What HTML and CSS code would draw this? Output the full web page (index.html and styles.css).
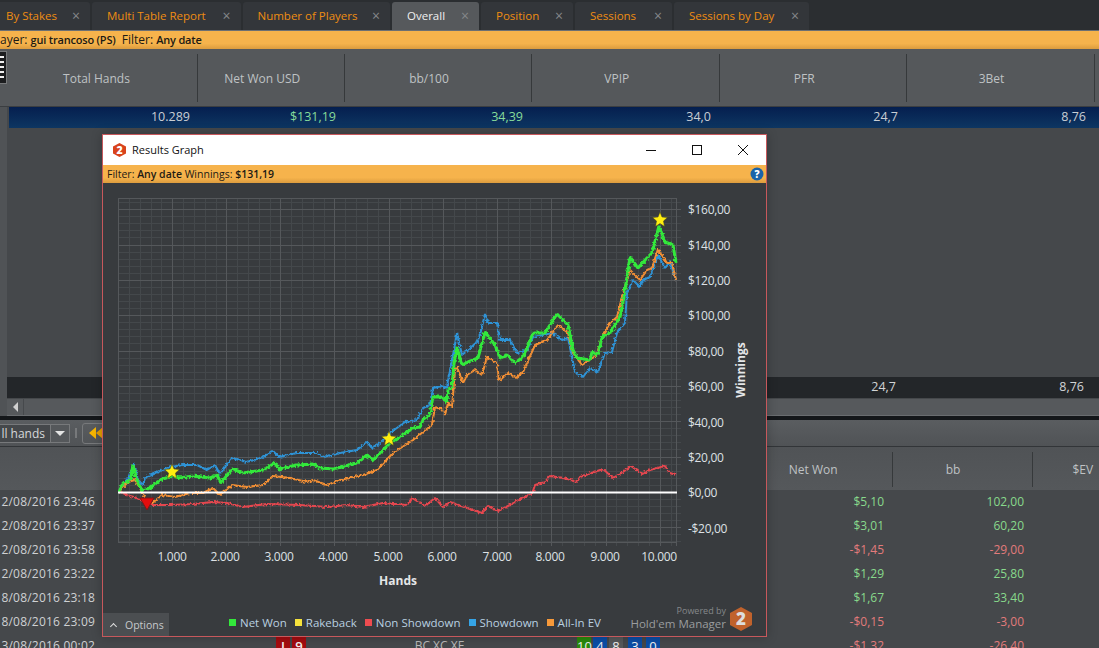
FILE: index.html
```html
<!DOCTYPE html>
<html lang="en">
<head>
    <meta charset="UTF-8">
    <title>Overall - Hold'em Manager 2</title>
    <link rel="stylesheet" href="styles.css">
</head>
<body>
    <nav class="tabs">
        <div class="tab tab-first">By Stakes <span class="tab-x">&times;</span></div>
        <div class="tab">Multi Table Report <span class="tab-x">&times;</span></div>
        <div class="tab">Number of Players <span class="tab-x">&times;</span></div>
        <div class="tab tab-active">Overall <span class="tab-x">&times;</span></div>
        <div class="tab">Position <span class="tab-x">&times;</span></div>
        <div class="tab">Sessions <span class="tab-x">&times;</span></div>
        <div class="tab">Sessions by Day <span class="tab-x">&times;</span></div>
    </nav>
    <div class="filter-bar">ayer: <b>gui trancoso (PS)</b> &nbsp;Filter: <b>Any date</b></div>

    <section class="stats">
        <div class="side-grip"></div>
        <div class="stats-head">
            <div class="head-cell">Total Hands</div>
            <div class="head-cell">Net Won USD</div>
            <div class="head-cell">bb/100</div>
            <div class="head-cell">VPIP</div>
            <div class="head-cell">PFR</div>
            <div class="head-cell">3Bet</div>
        </div>
        <div class="stats-body">
            <div class="stats-row stats-row-blue">
                <div>10.289</div>
                <div class="pos">$131,19</div>
                <div class="pos">34,39</div>
                <div>34,0</div>
                <div>24,7</div>
                <div>8,76</div>
            </div>
            <div class="stats-fill"></div>
            <div class="stats-row stats-row-total">
                <div></div>
                <div></div>
                <div></div>
                <div></div>
                <div>24,7</div>
                <div>8,76</div>
            </div>
            <div class="hscroll">
                <div class="hscroll-btn"><span class="arrow-left"></span></div>
            </div>
        </div>
    </section>

    <div class="split-line"></div>

    <section class="hands">
        <div class="toolbar">
            <div class="combo"><span class="combo-text">ll hands</span><span class="combo-btn"><span class="arrow-down"></span></span></div>
            <div class="tool-sep"></div>
            <div class="tool-btn">
                <svg width="14" height="12" viewBox="0 0 14 12">
                    <polygon points="7,0 7,12 0,6" fill="#f7b500"/>
                    <polygon points="14,0 14,12 7,6" fill="#e8a000"/>
                </svg>
            </div>
        </div>
        <div class="hands-head">
            <div class="hands-head-cell hc-net">Net Won</div>
            <div class="hands-head-cell hc-bb">bb</div>
            <div class="hands-head-cell hc-ev">$EV</div>
        </div>
        <div class="hand-row"><div class="date">2/08/2016 23:46</div><div></div><div></div><div></div><div></div><div class="pos">$5,10</div><div class="pos">102,00</div></div>
        <div class="hand-row"><div class="date">2/08/2016 23:37</div><div></div><div></div><div></div><div></div><div class="pos">$3,01</div><div class="pos">60,20</div></div>
        <div class="hand-row"><div class="date">2/08/2016 23:58</div><div></div><div></div><div></div><div></div><div class="neg">-$1,45</div><div class="neg">-29,00</div></div>
        <div class="hand-row"><div class="date">2/08/2016 23:22</div><div></div><div></div><div></div><div></div><div class="pos">$1,29</div><div class="pos">25,80</div></div>
        <div class="hand-row"><div class="date">8/08/2016 23:18</div><div></div><div></div><div></div><div></div><div class="pos">$1,67</div><div class="pos">33,40</div></div>
        <div class="hand-row"><div class="date">8/08/2016 23:09</div><div></div><div></div><div></div><div></div><div class="neg">-$0,15</div><div class="neg">-3,00</div></div>
        <div class="hand-row">
            <div class="date">3/08/2016 00:02</div>
            <div></div>
            <div class="cards"><span class="card card-red">I</span><span class="card card-red">9</span></div>
            <div class="action">BC XC XE</div>
            <div class="cards">
                <span class="card card-wide card-green">10</span>
                <span class="card card-wide card-blue">4</span>
                <span class="card card-wide card-grey">8</span>
                <span class="card card-wide card-blue card-gap">3</span>
                <span class="card card-wide card-blue card-gap-last">0</span>
            </div>
            <div class="neg">-$1,32</div>
            <div class="neg">-26,40</div>
        </div>
    </section>

    <!-- janela flutuante do grafico -->
    <div class="graph-window">
        <div class="title-bar">
            <svg class="title-logo" width="13" height="14" viewBox="0 0 13 14">
                <polygon points="6.5,0 13,3.5 13,10.5 6.5,14 0,10.5 0,3.5" fill="#d9431c"/>
                <text x="6.5" y="11" class="title-logo-num">2</text>
            </svg>
            <span class="title-text">Results Graph</span>
            <div class="win-btns">
                <svg width="12" height="12" viewBox="0 0 12 12"><path d="M1 6.5H11" stroke="#111" stroke-width="1"/></svg>
                <svg width="12" height="12" viewBox="0 0 12 12"><rect x="1.5" y="1.5" width="9" height="9" fill="none" stroke="#111"/></svg>
                <svg width="12" height="12" viewBox="0 0 12 12"><path d="M1 1L11 11M11 1L1 11" stroke="#111" stroke-width="1"/></svg>
            </div>
        </div>
        <div class="graph-filter">
            <span>Filter: <b>Any date</b> Winnings: <b>$131,19</b></span>
            <svg class="help" width="14" height="14" viewBox="0 0 14 14">
                <circle cx="7" cy="7" r="6.5" fill="#1b63a8"/>
                <text x="7" y="10.5" class="help-mark">?</text>
            </svg>
        </div>

        <svg class="chart" width="663" height="418" viewBox="103 183 663 418">
            <defs>
                <filter id="rough" x="100" y="190" width="600" height="340" filterUnits="userSpaceOnUse">
                    <feTurbulence type="fractalNoise" baseFrequency="0.4" numOctaves="2" seed="7"/>
                    <feDisplacementMap in="SourceGraphic" scale="4" xChannelSelector="R" yChannelSelector="G"/>
                </filter>
            </defs>

            <!-- grade menor -->
            <path class="grid-minor" d="M129.5 198V546M140.5 198V546M151.5 198V546M161.5 198V546M183.5 198V546M194.5 198V546M205.5 198V546M216.5 198V546M237.5 198V546M248.5 198V546M259.5 198V546M270.5 198V546M291.5 198V546M302.5 198V546M313.5 198V546M324.5 198V546M345.5 198V546M356.5 198V546M367.5 198V546M378.5 198V546M400.5 198V546M411.5 198V546M421.5 198V546M432.5 198V546M454.5 198V546M465.5 198V546M476.5 198V546M486.5 198V546M508.5 198V546M519.5 198V546M530.5 198V546M541.5 198V546M562.5 198V546M573.5 198V546M584.5 198V546M595.5 198V546M616.5 198V546M627.5 198V546M638.5 198V546M649.5 198V546M671.5 198V546"/>
            <path class="grid-minor" d="M118 202.5H681M118 216.5H681M118 223.5H681M118 230.5H681M118 237.5H681M118 252.5H681M118 259.5H681M118 266.5H681M118 273.5H681M118 287.5H681M118 294.5H681M118 301.5H681M118 308.5H681M118 322.5H681M118 329.5H681M118 336.5H681M118 343.5H681M118 358.5H681M118 365.5H681M118 372.5H681M118 379.5H681M118 393.5H681M118 400.5H681M118 407.5H681M118 414.5H681M118 428.5H681M118 435.5H681M118 442.5H681M118 449.5H681M118 464.5H681M118 471.5H681M118 478.5H681M118 485.5H681M118 499.5H681M118 506.5H681M118 513.5H681M118 520.5H681M118 534.5H681M118 541.5H681"/>
            <!-- grade maior -->
            <path class="grid-major" d="M118.5 198V542M172.5 198V546M226.5 198V546M280.5 198V546M334.5 198V546M389.5 198V546M443.5 198V546M497.5 198V546M551.5 198V546M606.5 198V546M660.5 198V546M676.5 198V546"/>
            <path class="grid-major" d="M118 198.5H676M118 209.5H681M118 245.5H681M118 280.5H681M118 315.5H681M118 351.5H681M118 386.5H681M118 421.5H681M118 457.5H681M118 527.5H681M118 542.5H676"/>

            <g class="lines" filter="url(#rough)">
                <polyline class="line line-blue" points="119,492 125,482 130,476 134,463 138,480 143,485 145,478 158,472 170,467 183,465 197,465 207,470 215,465 220,474 232,458 247,462 263,457 273,451 279,457 297,453 317,453 323,457 340,453 357,450 367,442 372,448 380,443 390,433 405,422 417,420 423,408 430,405 433,388 442,386 447,388 448,380 454,350 457,333 462,355 477,342 480,335 485,314 488,323 497,323 500,340 510,340 517,353 527,350 533,337 553,333 562,340 568,338 575,372 583,377 590,368 598,372 605,353 612,352 617,333 625,323 627,293 633,280 640,287 643,280 650,277 658,255 665,268 670,262 676,280"/>
                <polyline class="line line-orange" points="119,492 123,487 128,482 135,480 140,488 146,500 150,505 162,495 175,497 190,493 203,493 213,488 220,495 232,485 247,487 263,485 273,476 290,478 307,482 313,480 327,485 340,480 363,475 377,470 393,453 413,440 423,432 432,425 435,407 443,410 445,415 448,403 452,407 455,370 457,367 463,383 467,375 475,370 482,375 487,357 497,363 499,381 508,373 516,378 523,372 535,345 547,340 558,325 568,333 573,353 582,365 597,355 602,337 610,323 617,317 623,293 630,270 640,280 647,270 652,268 658,249 667,263 672,263 676,280"/>
                <polyline class="line line-red" points="119,491 127,495 137,498 150,505 170,505 193,504 213,502 227,503 243,507 267,504 300,505 327,507 347,505 363,507 383,503 407,505 412,498 425,506 435,498 443,507 450,502 467,508 482,513 488,506 498,511 510,505 520,499 532,494 535,485 545,482 550,476 563,478 577,482 580,477 603,469 613,478 623,472 631,466 642,474 650,470 665,466 670,473 676,475"/>
                <polyline class="line line-green" points="119,492 123,483 127,482 131,479 133,465 136,477 138,483 142,490 150,488 160,480 172,476 180,478 193,476 210,478 217,475 221,483 232,469 243,473 263,470 275,463 279,469 297,465 313,464 320,468 333,469 357,463 367,455 373,460 380,453 390,443 403,435 413,428 420,427 423,420 430,415 433,397 442,397 447,402 448,390 452,388 454,363 457,347 462,365 468,362 478,358 485,332 495,345 500,358 507,355 515,363 523,357 533,333 545,333 557,314 568,325 573,350 577,358 590,360 592,352 598,355 602,337 610,333 617,322 620,317 624,297 630,257 638,268 647,258 652,253 659,226 665,242 673,245 676,263"/>
            </g>
            <path class="zero-line" d="M118 492.5H677"/>

            <polygon class="mark-low" points="140,498 154,498 147,510"/>
            <polygon class="mark-high" points="172,464 174,469 179.500,469.500 175.500,473 176.500,478.500 172,475.500 167.500,478.500 168.500,473 164.500,469.500 170,469"/>
            <polygon class="mark-high" points="389,431 391,436 396.500,436.500 392.500,440 393.500,445.500 389,442.500 384.500,445.500 385.500,440 381.500,436.500 387,436"/>
            <polygon class="mark-high" points="660,212 662,217 667.500,217.500 663.500,221 664.500,226.500 660,223.500 655.500,226.500 656.500,221 652.500,217.500 658,217"/>

            <text class="axis" x="688" y="214">$160,00</text>
            <text class="axis" x="688" y="249.500">$140,00</text>
            <text class="axis" x="688" y="285">$120,00</text>
            <text class="axis" x="688" y="320">$100,00</text>
            <text class="axis" x="688" y="355.500">$80,00</text>
            <text class="axis" x="688" y="391">$60,00</text>
            <text class="axis" x="688" y="426.500">$40,00</text>
            <text class="axis" x="688" y="461.500">$20,00</text>
            <text class="axis" x="688" y="497">$0,00</text>
            <text class="axis" x="688" y="532.500">-$20,00</text>

            <text class="axis axis-x" x="172" y="561">1.000</text>
            <text class="axis axis-x" x="225" y="561">2.000</text>
            <text class="axis axis-x" x="279" y="561">3.000</text>
            <text class="axis axis-x" x="333" y="561">4.000</text>
            <text class="axis axis-x" x="388" y="561">5.000</text>
            <text class="axis axis-x" x="442" y="561">6.000</text>
            <text class="axis axis-x" x="497" y="561">7.000</text>
            <text class="axis axis-x" x="550" y="561">8.000</text>
            <text class="axis axis-x" x="605" y="561">9.000</text>
            <text class="axis axis-x" x="659" y="561">10.000</text>

            <text class="axis-title" x="398" y="585">Hands</text>
            <text class="axis-title" transform="translate(745 370) rotate(-90)">Winnings</text>
        </svg>

        <div class="graph-footer">
            <div class="options"><span class="chev"></span>Options</div>
            <div class="legend">
                <span class="legend-item"><i class="sq sq-green"></i>Net Won</span>
                <span class="legend-item"><i class="sq sq-yellow"></i>Rakeback</span>
                <span class="legend-item"><i class="sq sq-red"></i>Non Showdown</span>
                <span class="legend-item"><i class="sq sq-blue"></i>Showdown</span>
                <span class="legend-item"><i class="sq sq-orange"></i>All-In EV</span>
            </div>
            <div class="brand">
                <div class="brand-text">
                    <div class="brand-small">Powered by</div>
                    <div class="brand-name">Hold'em Manager</div>
                </div>
                <svg width="22" height="24" viewBox="0 0 22 24">
                    <polygon points="11,0 22,6 22,18 11,24 0,18 0,6" fill="#c0622c"/>
                    <text x="11" y="18" class="brand-num">2</text>
                </svg>
            </div>
        </div>
    </div>
</body>
</html>
```

FILE: styles.css
```css
* {
    margin: 0;
    padding: 0;
    box-sizing: border-box;
}
html, body {
    width: 1099px;
    height: 648px;
    overflow: hidden;
}
body {
    font-family: "Open Sans", "Noto Sans", sans-serif;
    font-size: 12px;
    background-color: #45484b;
    color: #c8cbcd;
    position: relative;
}

/* abas */
.tabs {
    display: flex;
    height: 31px;
    padding-top: 2px;
    background-color: #2b2e31;
    border-bottom: 1px solid #6c6f72;
}
.tab {
    display: flex;
    align-items: center;
    justify-content: space-between;
    padding: 0 10px 1px 15px;
    margin-right: 2px;
    background-color: #33363a;
    color: #ee8d12;
    font-size: 11.500px;
    border-radius: 3px 3px 0 0;
    white-space: nowrap;
}
.tab:nth-child(2) { width: 148.500px; }
.tab:nth-child(3) { width: 147.500px; }
.tab:nth-child(5) { width: 92px; }
.tab:nth-child(6) { width: 97px; }
.tab:nth-child(7) { width: 135px; }
.tab-first {
    width: 90px;
    padding-left: 6px;
    border-radius: 0 3px 0 0;
}
.tab-active {
    width: 87px;
    background-color: #56595c;
    color: #f0f0f0;
}
.tab-x {
    color: #85888a;
    font-size: 14px;
    line-height: 1;
}

.filter-bar {
    height: 18px;
    background: linear-gradient(#f6b34c 70%, #dc9c3e);
    color: #1c1a14;
    line-height: 18px;
    white-space: nowrap;
}
.filter-bar b {
    font-size: 11px;
    font-weight: 600;
    letter-spacing: -0.2px;
}

/* tabela de cima */
.stats {
    position: relative;
    height: 367px;
    display: flex;
    flex-direction: column;
}
.side-grip {
    position: absolute;
    top: 2px;
    left: 0;
    width: 7px;
    height: 33px;
    background-color: #1c1d1f;
    background-image: repeating-linear-gradient(#f0f0f0 0 2px, transparent 2px 5px);
    background-size: 4px 24px;
    background-position: 0 4px;
    background-repeat: no-repeat;
    border: 1px solid #77797b;
    border-left: 0;
}
.stats-head {
    display: grid;
    grid-template-columns: 198px 146.500px 187px 188.500px 186.500px 188px 5px;
    height: 58px;
    padding: 5px 0 4px;
    background-color: #55585b;
    border-bottom: 1px solid #3b3e41;
}
.head-cell {
    display: flex;
    align-items: center;
    justify-content: center;
    padding-right: 17px;
    border-right: 1px solid #36393b;
    color: #bfc2c4;
}
.head-cell:first-child {
    padding-left: 13px;
}
.stats-body {
    flex: 1;
    display: flex;
    flex-direction: column;
    border-left: 7px solid #505356;
}
.stats-row {
    display: grid;
    height: 21px;
    line-height: 20px;
    font-size: 12.500px;
    text-align: right;
}
.stats-row-blue {
    margin-left: 2px;
    grid-template-columns: 181px 146px 187px 188px 187px 188px;
    background: linear-gradient(#051f4f, #0d3662);
    color: #c9ced4;
}
.stats-fill {
    flex: 1;
}
.stats-row-total {
    grid-template-columns: 181px 146px 187px 188px 187px 188px;
    background-color: #232629;
    color: #d2d4d6;
}
.hscroll {
    height: 18px;
    background-color: #56595c;
    border-top: 1px solid #45484b;
    border-bottom: 1px solid #6a6d70;
}
.hscroll-btn {
    width: 17px;
    height: 100%;
    display: flex;
    align-items: center;
    justify-content: center;
    border-right: 1px solid #46494c;
}
.arrow-left {
    width: 0;
    height: 0;
    border-top: 5px solid transparent;
    border-bottom: 5px solid transparent;
    border-right: 5px solid #d0d0d0;
}
.split-line {
    height: 4px;
    background-color: #14171a;
}

/* tabela de baixo */
.toolbar {
    height: 27px;
    display: flex;
    align-items: center;
    background: linear-gradient(#5a5d60, #505356);
    border-bottom: 1px solid #323538;
}
.combo {
    display: flex;
    width: 70px;
    height: 19px;
    align-items: center;
    justify-content: flex-end;
    border: 1px solid #77797b;
    border-left: 0;
    background-color: #45484b;
    white-space: nowrap;
}
.combo-text {
    color: #d6d8da;
    margin-right: 5px;
}
.combo-btn {
    display: flex;
    width: 19px;
    height: 100%;
    flex-shrink: 0;
    align-items: center;
    justify-content: center;
    border-left: 1px solid #77797b;
    background-color: #55585b;
}
.arrow-down {
    width: 0;
    height: 0;
    border-left: 5px solid transparent;
    border-right: 5px solid transparent;
    border-top: 5px solid #e4e4e4;
}
.tool-sep {
    width: 2px;
    height: 10px;
    margin-left: 5px;
    background-color: #77797b;
}
.tool-btn {
    display: flex;
    width: 34px;
    height: 21px;
    margin-left: 5px;
    align-items: center;
    padding-left: 6px;
    border: 1px solid #77797b;
    border-radius: 3px;
}
.hands-head {
    display: grid;
    grid-template-columns: 753px 139.500px 140px 66.500px;
    height: 43px;
    padding: 5px 0 3px;
    background: linear-gradient(#505356, #55585b);
    grid-template-areas: ". net bb ev";
}
.hands-head-cell {
    display: flex;
    align-items: center;
    color: #bfc2c4;
    white-space: nowrap;
}
.hc-net {
    grid-area: net;
    justify-content: center;
    padding-right: 18px;
    border-right: 1px solid #36393b;
}
.hc-bb {
    grid-area: bb;
    justify-content: center;
    padding-right: 18px;
    border-right: 1px solid #36393b;
}
.hc-ev {
    grid-area: ev;
    padding-left: 40px;
}
.hand-row {
    display: grid;
    grid-template-columns: 95px 181px 30px 271px 83px 224px 140px;
    height: 24px;
    line-height: 24px;
    text-align: right;
}
.date {
    white-space: nowrap;
    color: #cfd1d3;
    letter-spacing: 0.2px;
}
.pos {
    color: #88d98c;
}
.stats-row-blue .pos {
    color: #86dc9a;
}
.neg {
    color: #e27b7b;
}
.action {
    text-align: center;
    padding-right: 4px;
    color: #bbb;
}
.cards {
    display: flex;
    gap: 2px;
    padding-top: 3px;
}
.card {
    width: 14px;
    height: 20px;
    line-height: 18px;
    text-align: center;
    color: #f2f2f2;
    font-size: 13px;
    font-weight: 600;
}
.card-red { background-color: #a40c10; }
.card-wide { flex-shrink: 0; font-weight: 400; }
.card-green { background-color: #2a8a0c; }
.card-blue { background-color: #0b4da6; }
.card-grey { background-color: #56585a; }
.card-gap { margin-left: 3px; }
.card-gap-last { margin-left: 2px; }

/* janela flutuante */
.graph-window {
    position: absolute;
    left: 102px;
    top: 134px;
    width: 665px;
    height: 503px;
    display: flex;
    flex-direction: column;
    background-color: #383b3e;
    border: 1px solid #c7585c;
    box-shadow: 0 0 10px rgba(0, 0, 0, 0.25);
}
.title-bar {
    display: flex;
    height: 30px;
    align-items: center;
    padding: 0 0 1px 10px;
    background-color: #ffffff;
    color: #111;
    font-size: 11px;
}
.title-logo-num {
    font-family: "Open Sans", sans-serif;
    font-size: 10.500px;
    font-weight: 800;
    fill: #fff;
    text-anchor: middle;
}
.title-text {
    margin-left: 6px;
}
.win-btns {
    display: flex;
    gap: 34px;
    margin-left: auto;
    margin-right: 17px;
}
.graph-filter {
    display: flex;
    height: 18px;
    align-items: center;
    justify-content: space-between;
    padding: 0 2px 0 4px;
    background: linear-gradient(#f6b34c 70%, #dc9c3e);
    color: #1c1a14;
    font-size: 10.500px;
}
.graph-filter b {
    font-weight: 600;
}
.help-mark {
    font-family: "Open Sans", sans-serif;
    font-size: 10px;
    font-weight: 800;
    fill: #fff;
    text-anchor: middle;
}
.chart {
    display: block;
}
.grid-minor {
    stroke: #44484b;
    stroke-width: 1;
    fill: none;
}
.grid-major {
    stroke: #55585b;
    stroke-width: 1;
    fill: none;
}
.line {
    fill: none;
    stroke-width: 2;
    stroke-linejoin: bevel;
}
.line-blue { stroke: #2f93d6; }
.line-orange { stroke: #f28f35; }
.line-red { stroke: #e5474f; }
.line-green { stroke: #33e83b; stroke-width: 3; }
.zero-line {
    stroke: #ffffff;
    stroke-width: 2;
}
.mark-high {
    fill: #ffee10;
    stroke: #3a3d20;
    stroke-width: 0.500;
}
.mark-low {
    fill: #e30d0d;
    stroke: #7a1818;
    stroke-width: 1;
}
.axis {
    font-family: "Open Sans", sans-serif;
    font-size: 12px;
    letter-spacing: -0.3px;
    fill: #dde1e5;
}
.axis-x {
    text-anchor: middle;
}
.axis-title {
    font-family: "Open Sans", sans-serif;
    font-size: 12px;
    font-weight: 700;
    fill: #e4e6e8;
    text-anchor: middle;
}
.graph-footer {
    flex: 1;
    display: flex;
    align-items: flex-end;
    position: relative;
}
.options {
    display: flex;
    width: 66px;
    height: 23px;
    align-items: center;
    background-color: #4b4e51;
    color: #c6c9cb;
    font-size: 10.500px;
    padding-left: 8px;
}
.chev {
    width: 5px;
    height: 5px;
    margin: 3px 9px 0 0;
    border-top: 1px solid #ddd;
    border-left: 1px solid #ddd;
    transform: rotate(45deg);
}
.legend {
    display: flex;
    height: 23px;
    align-items: center;
    margin: 0 0 2px 60px;
    gap: 8px;
    font-size: 11.500px;
    color: #b9d0e0;
}
.legend-item {
    display: flex;
    align-items: center;
    gap: 4px;
    white-space: nowrap;
}
.sq {
    width: 7px;
    height: 7px;
}
.sq-green { background-color: #33e83b; }
.sq-yellow { background-color: #f5e23c; }
.sq-red { background-color: #ee4c50; }
.sq-blue { background-color: #35a4e6; }
.sq-orange { background-color: #f6993a; }
.brand {
    display: flex;
    align-items: center;
    gap: 4px;
    margin-left: auto;
    margin-right: 14px;
    padding-bottom: 4px;
}
.brand-text {
    text-align: right;
    color: #9a9d9f;
}
.brand-small {
    font-size: 9px;
    line-height: 11px;
    color: #85888a;
}
.brand-name {
    font-size: 11.500px;
    line-height: 16px;
}
.brand-num {
    font-family: "Open Sans", sans-serif;
    font-size: 17px;
    font-weight: 800;
    fill: #ddd;
    text-anchor: middle;
}
```
